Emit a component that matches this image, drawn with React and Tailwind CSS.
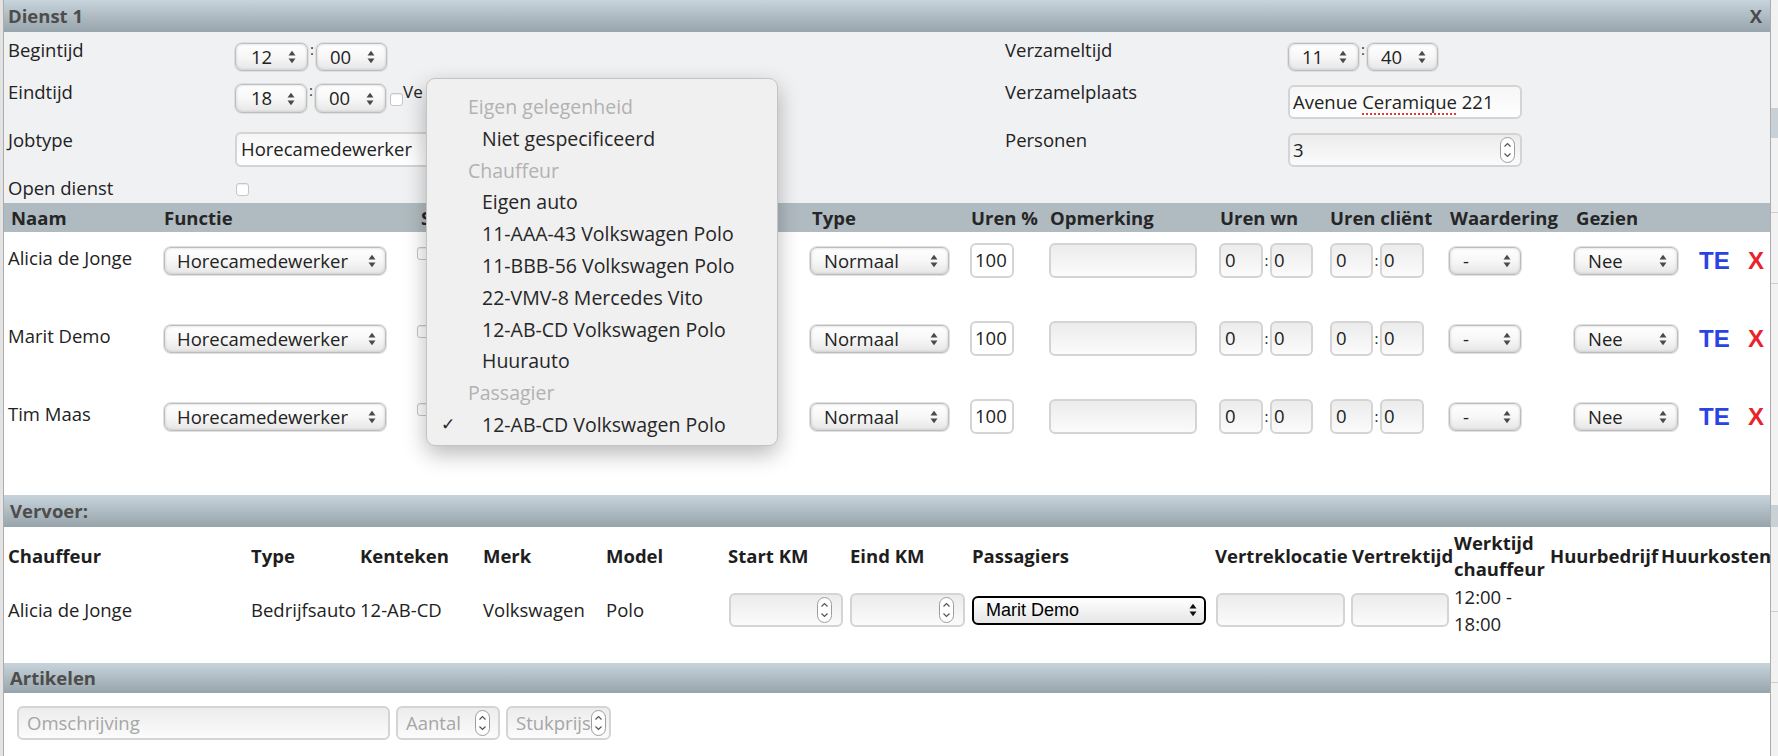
import React from "react";

function Arrows({ dark = false }) {
  const c = dark ? "#111111" : "#4a4a4a";
  return (
    <svg width="8" height="14" viewBox="0 0 8 14" className="shrink-0">
      <polygon points="0.5,5.5 4,0.8 7.5,5.5" fill={c} />
      <polygon points="0.5,8.5 4,13.2 7.5,8.5" fill={c} />
    </svg>
  );
}

function Spin() {
  return (
    <svg width="15" height="26" viewBox="0 0 15 26" className="shrink-0">
      <rect x="0.5" y="0.5" width="14" height="25" rx="7" fill="#ffffff" stroke="#9d9d9d" />
      <path d="M4.5 9.5 L7.5 6.5 L10.5 9.5" stroke="#555555" fill="none" strokeWidth="1.2" />
      <path d="M4.5 16.5 L7.5 19.5 L10.5 16.5" stroke="#555555" fill="none" strokeWidth="1.2" />
    </svg>
  );
}

function Select({ text, cls, pl = "pl-[14px]", pr = "pr-[11px]" }) {
  return (
    <div
      className={`flex items-center justify-between rounded-[7px] border border-[#bdbdbd] bg-linear-to-b from-white via-[#f7f7f7] to-[#e6e6e6] shadow-[0_0_0_1px_#e0e0e0,inset_0_0_3px_rgba(0,0,0,0.18)] text-[18.5px] leading-none text-[#222222] ${pl} ${pr} ${cls}`}
    >
      <span>{text}</span>
      <Arrows />
    </div>
  );
}

function Input({ children, cls = "", bg = "bg-linear-to-b from-[#ececec] to-[#fbfbfb]" }) {
  return (
    <div
      className={`flex items-center rounded-[6px] border-2 border-[#d4d4d4] text-[18.5px] leading-none text-[#222222] whitespace-nowrap overflow-hidden ${bg} ${cls}`}
    >
      {children}
    </div>
  );
}

function Checkbox({ cls = "" }) {
  return (
    <div
      className={`w-[13px] h-[13px] rounded-[3px] border border-[#c6c6c6] bg-white shadow-[inset_0_1px_1px_rgba(0,0,0,0.08)] ${cls}`}
    />
  );
}

function Colon() {
  return <span className="w-[8px] self-start text-center text-[15px] leading-[13px] text-[#333333]">:</span>;
}

function StaffRow({ name }) {
  return (
    <div className="h-[78px] shrink-0 grid grid-cols-[160px_253px_393px_160px_79px_170px_111px_119px_125px_125px_49px_22px] items-start">
      <div className="pl-[4px] pt-[16px] leading-[20px] whitespace-nowrap">{name}</div>
      <div className="pt-[15px]">
        <Select cls="w-[222px] h-[28px]" pl="pl-[12px]" pr="pr-[9px]" text="Horecamedewerker" />
      </div>
      <div className="pt-[15px]">
        <Checkbox />
      </div>
      <div className="pt-[15px]">
        <Select cls="w-[139px] h-[28px]" pl="pl-[13px]" pr="pr-[10px]" text="Normaal" />
      </div>
      <div className="pt-[11px]">
        <Input cls="w-[44px] h-[35px] pl-[3px]" bg="bg-white">100</Input>
      </div>
      <div className="pt-[11px]">
        <Input cls="w-[148px] h-[35px]" />
      </div>
      <div className="pt-[11px] flex items-center">
        <Input cls="w-[44px] h-[35px] pl-[4px]">0</Input>
        <span className="w-[7px] text-center text-[15px] leading-none">:</span>
        <Input cls="w-[43px] h-[35px] pl-[2px]">0</Input>
      </div>
      <div className="pt-[11px] flex items-center">
        <Input cls="w-[43px] h-[35px] pl-[4px]">0</Input>
        <span className="w-[7px] text-center text-[15px] leading-none">:</span>
        <Input cls="w-[44px] h-[35px] pl-[2px]">0</Input>
      </div>
      <div className="pt-[15px]">
        <Select cls="w-[72px] h-[28px]" pl="pl-[13px]" pr="pr-[9px]" text="-" />
      </div>
      <div className="pt-[15px]">
        <Select cls="w-[104px] h-[28px]" pl="pl-[13px]" pr="pr-[10px]" text="Nee" />
      </div>
      <div className="pt-[16px] font-['Liberation_Sans',sans-serif] font-bold text-[24px] leading-[25px] text-[#2a44e3]">TE</div>
      <div className="pt-[16px] font-['Liberation_Sans',sans-serif] font-bold text-[24px] leading-[25px] text-[#e8232a]">X</div>
    </div>
  );
}

const menu = [
  { g: "Eigen gelegenheid" },
  { t: "Niet gespecificeerd" },
  { g: "Chauffeur" },
  { t: "Eigen auto" },
  { t: "11-AAA-43 Volkswagen Polo" },
  { t: "11-BBB-56 Volkswagen Polo" },
  { t: "22-VMV-8 Mercedes Vito" },
  { t: "12-AB-CD Volkswagen Polo" },
  { t: "Huurauto" },
  { g: "Passagier" },
  { t: "12-AB-CD Volkswagen Polo", c: true },
];

const band = "bg-linear-to-b from-[#c7d4db] to-[#98a4ab]";
const vcols = "grid grid-cols-[245px_109px_123px_123px_122px_122px_122px_243px_136px_103px_96px_111px_111px]";

export default function App() {
  return (
    <div className="relative w-[1778px] h-[756px] overflow-hidden flex bg-white font-['Open_Sans','DejaVu_Sans',sans-serif] text-[18.5px] text-[#222222]">
      <div className="w-[3px] shrink-0 bg-[#e3e3e3]" />
      <div className="w-[1768px] shrink-0 flex flex-col border-x border-[#acacac]">
        {/* Title */}
        <div className={`h-[32px] shrink-0 flex items-center justify-between pl-[4px] pr-[8px] ${band}`}>
          <span className="font-bold text-[#4d4d4d]">Dienst 1</span>
          <span className="font-bold text-[#4a4a4a]">X</span>
        </div>

        {/* Top form */}
        <div className="h-[171px] shrink-0 bg-[#f0f1f3] pt-[8px] grid grid-cols-[231px_770px_283px_1fr] grid-rows-[42px_48px_48px_25px] leading-[20px]">
          <div className="pl-[4px]">Begintijd</div>
          <div className="flex items-start pt-[3px]">
            <Select cls="w-[73px] h-[28px]" pl="pl-[15px]" text="12" />
            <Colon />
            <Select cls="w-[71px] h-[28px]" pl="pl-[13px]" text="00" />
          </div>
          <div>Verzameltijd</div>
          <div className="flex items-start pt-[3px]">
            <Select cls="w-[71px] h-[28px]" pl="pl-[13px]" text="11" />
            <Colon />
            <Select cls="w-[71px] h-[28px]" pl="pl-[13px]" text="40" />
          </div>

          <div className="pl-[4px]">Eindtijd</div>
          <div className="flex items-start pt-[2px]">
            <Select cls="w-[72px] h-[29px]" pl="pl-[15px]" text="18" />
            <Colon />
            <Select cls="w-[71px] h-[29px]" pl="pl-[13px]" text="00" />
            <Checkbox cls="ml-[4px] mt-[9px] shrink-0" />
            <span className="-mt-[1px] text-[17px] leading-[18px] whitespace-nowrap">Ve</span>
          </div>
          <div>Verzamelplaats</div>
          <div className="pt-[3px]">
            <Input cls="w-[234px] h-[34px] pl-[3px]" bg="bg-linear-to-b from-[#f6f6f6] to-white">
              Avenue&nbsp;
              <span className="underline decoration-dotted decoration-[#e53935] decoration-2 underline-offset-[5px]">Ceramique</span>
              &nbsp;221
            </Input>
          </div>

          <div className="pl-[4px]">Jobtype</div>
          <div className="pt-[2px]">
            <Input cls="w-[230px] h-[35px] pl-[4px]" bg="bg-linear-to-b from-[#f6f6f6] to-white">Horecamedewerker</Input>
          </div>
          <div>Personen</div>
          <div className="pt-[3px]">
            <Input cls="w-[234px] h-[34px] pl-[3px] pr-[5px] justify-between">
              <span>3</span>
              <Spin />
            </Input>
          </div>

          <div className="pl-[4px]">Open dienst</div>
          <div className="pt-[5px] pl-[1px]">
            <Checkbox />
          </div>
          <div />
          <div />
        </div>

        {/* Staff header */}
        <div className="h-[29px] shrink-0 bg-[#b0bbc1] grid grid-cols-[160px_253px_393px_160px_79px_170px_111px_119px_125px_125px_49px_22px] items-center font-bold text-[#262626] leading-[20px] whitespace-nowrap">
          <div className="pl-[7px]">Naam</div>
          <div>Functie</div>
          <div className="pl-[4px]">Standby</div>
          <div className="pl-[2px]">Type</div>
          <div className="pl-[1px]">Uren %</div>
          <div className="pl-[1px]">Opmerking</div>
          <div className="pl-[1px]">Uren wn</div>
          <div>Uren cliënt</div>
          <div className="pl-[1px]">Waardering</div>
          <div className="pl-[2px]">Gezien</div>
          <div />
          <div />
        </div>

        {/* Staff rows */}
        <div className="h-[263px] shrink-0 flex flex-col bg-white">
          <StaffRow name="Alicia de Jonge" />
          <StaffRow name="Marit Demo" />
          <StaffRow name="Tim Maas" />
        </div>

        {/* Vervoer */}
        <div className={`h-[32px] shrink-0 flex items-center pl-[6px] font-bold text-[#4d4d4d] ${band}`}>Vervoer:</div>
        <div className="h-[136px] shrink-0 pt-[3px] bg-white">
          <div className={`${vcols} h-[52px] items-center font-bold leading-[26px] text-[#1e1e1e] whitespace-nowrap`}>
            <div className="pl-[4px]">Chauffeur</div>
            <div className="pl-[2px]">Type</div>
            <div className="pl-[2px]">Kenteken</div>
            <div className="pl-[2px]">Merk</div>
            <div className="pl-[2px]">Model</div>
            <div className="pl-[2px]">Start KM</div>
            <div className="pl-[2px]">Eind KM</div>
            <div className="pl-[2px]">Passagiers</div>
            <div className="pl-[2px]">Vertreklocatie</div>
            <div className="pl-[3px]">Vertrektijd</div>
            <div className="pl-[2px]">
              Werktijd
              <br />
              chauffeur
            </div>
            <div className="pl-[2px]">Huurbedrijf</div>
            <div className="pl-[2px]">Huurkosten</div>
          </div>
          <div className={`${vcols} h-[56px] items-center whitespace-nowrap`}>
            <div className="pl-[4px]">Alicia de Jonge</div>
            <div className="pl-[2px]">Bedrijfsauto</div>
            <div className="pl-[2px]">12-AB-CD</div>
            <div className="pl-[2px]">Volkswagen</div>
            <div className="pl-[2px]">Polo</div>
            <div className="pl-[3px]">
              <Input cls="w-[114px] h-[34px] justify-end pr-[9px]">
                <Spin />
              </Input>
            </div>
            <div className="pl-[2px]">
              <Input cls="w-[115px] h-[34px] justify-end pr-[9px]">
                <Spin />
              </Input>
            </div>
            <div className="pl-[2px]">
              <div className="flex items-center justify-between w-[234px] h-[29px] rounded-[6px] border-2 border-black bg-linear-to-b from-white to-[#e6e6e6] pl-[12px] pr-[7px] font-['Liberation_Sans',sans-serif] text-[18px] leading-none text-black">
                <span>Marit Demo</span>
                <Arrows dark />
              </div>
            </div>
            <div className="pl-[3px]">
              <Input cls="w-[129px] h-[34px]" />
            </div>
            <div className="pl-[2px]">
              <Input cls="w-[98px] h-[34px]" />
            </div>
            <div className="pl-[2px] leading-[27px]">
              12:00 -
              <br />
              18:00
            </div>
            <div />
            <div />
          </div>
        </div>

        {/* Artikelen */}
        <div className={`h-[30px] shrink-0 flex items-center pl-[6px] font-bold text-[#4d4d4d] ${band}`}>Artikelen</div>
        <div className="flex-1 bg-white flex items-start gap-[6px] pt-[13px] pl-[13px] text-[#a6a6a6]">
          <Input cls="w-[373px] h-[34px] pl-[8px] text-[#a6a6a6]">Omschrijving</Input>
          <Input cls="w-[104px] h-[34px] pl-[8px] pr-[8px] justify-between text-[#a6a6a6]">
            <span>Aantal</span>
            <Spin />
          </Input>
          <Input cls="w-[105px] h-[34px] pl-[8px] pr-[11px] justify-between text-[#a6a6a6]">
            <span>Stukprijs</span>
            <Spin />
          </Input>
        </div>
      </div>

      {/* page behind, right edge */}
      <div className="w-[7px] shrink-0 flex flex-col bg-[#f2f2f2]">
        <div className="h-[108px]" />
        <div className="h-[30px] bg-[#c9d1d6]" />
        <div className="h-[74px]" />
        <div className="h-px bg-[#cfcfcf]" />
        <div className="h-[70px]" />
        <div className="h-px bg-[#cfcfcf]" />
        <div className="h-[221px]" />
        <div className="h-[22px] bg-[#c9d1d6]" />
        <div className="h-[84px]" />
        <div className="h-px bg-[#cfcfcf]" />
        <div className="h-[70px]" />
        <div className="h-px bg-[#cfcfcf]" />
      </div>

      {/* Open dropdown menu */}
      <div className="absolute left-[426px] top-[78px] w-[352px] h-[368px] rounded-[9px] border border-[#c4c4c4] bg-[#f0f0f0] shadow-[0_8px_22px_rgba(0,0,0,0.28)] pt-[12px] text-[19.5px] leading-[31.8px] whitespace-nowrap">
        {menu.map((m, i) =>
          m.g ? (
            <div key={i} className="pl-[41px] text-[#b2b2b2]">
              {m.g}
            </div>
          ) : (
            <div key={i} className="flex text-[#262626]">
              <span className="w-[55px] pl-[14px] text-[17px] font-['DejaVu_Sans',sans-serif]">{m.c ? "✓" : ""}</span>
              <span>{m.t}</span>
            </div>
          )
        )}
      </div>
    </div>
  );
}
